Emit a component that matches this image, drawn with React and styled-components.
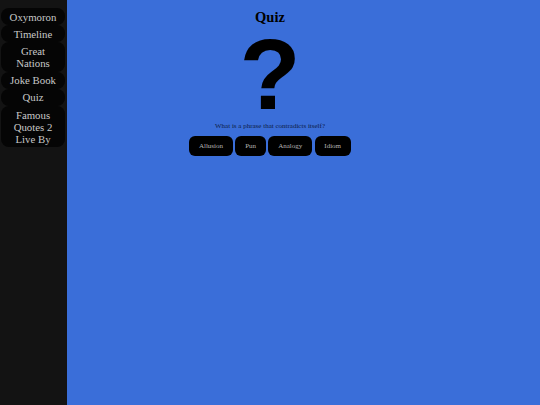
import React from 'react';
import styled, { createGlobalStyle } from 'styled-components';

const navItems = ['Oxymoron', 'Timeline', 'Great Nations', 'Joke Book', 'Quiz', 'Famous Quotes 2 Live By'];
const answers = ['Allusion', 'Pun', 'Analogy', 'Idiom'];

const GlobalStyle = createGlobalStyle`
  html, body {
    margin: 0;
    height: 100%;
    background: #3a6ed9;
    font-family: "Liberation Serif", "Times New Roman", serif;
  }
  #root {
    height: 100%;
  }
`;

const Layout = styled.div`
  display: grid;
  grid-template-columns: 67px 1fr;
  height: 100%;
`;

const Sidebar = styled.nav`
  background: #131313;
  padding: 8px 2px 0 1px;
  display: flex;
  flex-direction: column;
`;

const NavButton = styled.div`
  background: #050505;
  color: #c8c8c8;
  border-radius: 8px;
  text-align: center;
  font-size: 10.8px;
  line-height: 12px;
  padding: 2.6px 6px;
  cursor: pointer;
`;

const Main = styled.main`
  display: flex;
  flex-direction: column;
  align-items: center;
  padding-right: 67px;
`;

const Title = styled.h1`
  margin: 8px 0 0;
  font-size: 14.5px;
  line-height: 18px;
  font-weight: bold;
  color: #000;
`;

const QuestionMark = styled.div`
  margin-top: 2px;
  font-family: "Liberation Sans", Arial, sans-serif;
  font-weight: bold;
  font-size: 100px;
  line-height: 92px;
  color: #000;
`;

const Question = styled.p`
  margin: 2px 0 0;
  font-size: 7px;
  color: #0d1c45;
`;

const Answers = styled.div`
  display: flex;
  gap: 2.5px;
  margin-top: 6px;
`;

const AnswerButton = styled.button`
  background: #000;
  color: #b4b4b4;
  border: none;
  border-radius: 6px;
  height: 20px;
  padding: 0 9.8px;
  font-family: "Liberation Serif", "Times New Roman", serif;
  font-size: 7px;
  cursor: pointer;
`;

export default function App() {
  return (
    <>
      <GlobalStyle />
      <Layout>
        <Sidebar>
          {navItems.map((item) => (
            <NavButton key={item}>{item}</NavButton>
          ))}
        </Sidebar>
        <Main>
          <Title>Quiz</Title>
          <QuestionMark>?</QuestionMark>
          <Question>What is a phrase that contradicts itself?</Question>
          <Answers>
            {answers.map((a) => (
              <AnswerButton key={a}>{a}</AnswerButton>
            ))}
          </Answers>
        </Main>
      </Layout>
    </>
  );
}
